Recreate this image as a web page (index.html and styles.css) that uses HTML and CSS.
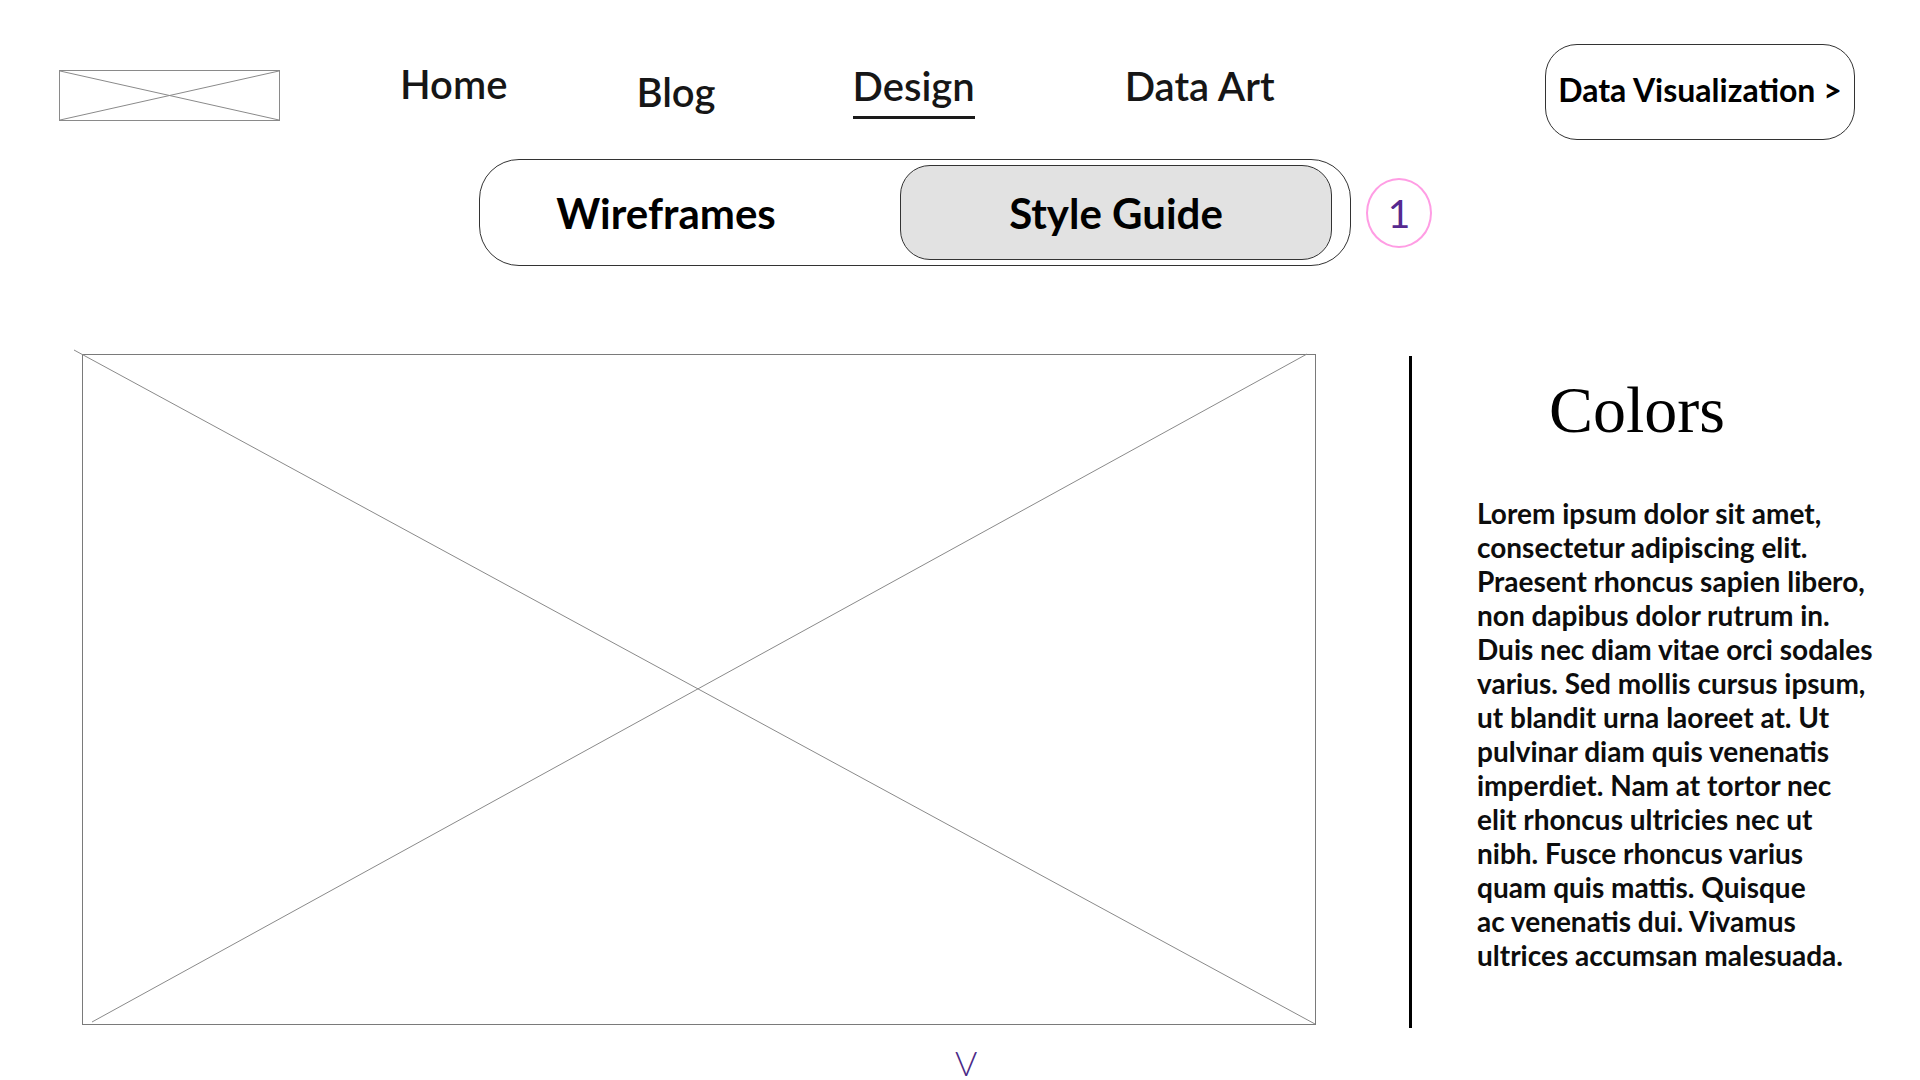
FILE: index.html
```html
<!DOCTYPE html>
<html lang="en">
<head>
<meta charset="UTF-8">
<meta name="viewport" content="width=device-width, initial-scale=1.0">
<title>Style Guide - Colors</title>
<link rel="stylesheet" href="styles.css">
</head>
<body>
<header class="topbar">
    <div class="logo">
        <svg width="221" height="51" viewBox="0 0 221 51">
            <rect x="0.5" y="0.5" width="220" height="50" fill="none" stroke="#8a8a8a"/>
            <line x1="1" y1="1" x2="220" y2="50" stroke="#8a8a8a"/>
            <line x1="1" y1="50" x2="220" y2="1" stroke="#8a8a8a"/>
        </svg>
    </div>
    <nav class="nav">
        <a class="nav-link home" href="#">Home</a>
        <a class="nav-link blog" href="#">Blog</a>
        <a class="nav-link design active" href="#">Design</a>
        <a class="nav-link art" href="#">Data Art</a>
    </nav>
    <a class="viz-btn" href="#">Data Visualization &gt;</a>
</header>

<div class="tabs-row">
    <div class="tabs">
        <div class="tab">Wireframes</div>
        <div class="tab active">Style Guide</div>
    </div>
    <span class="step">1</span>
</div>

<main class="content">
    <div class="placeholder">
        <svg width="1232" height="669" viewBox="0 0 1232 669">
            <line x1="-9" y1="-5" x2="1232" y2="669" stroke="#8a8a8a"/>
            <line x1="1224" y1="-1" x2="9" y2="667" stroke="#8a8a8a"/>
        </svg>
    </div>
    <div class="divider"></div>
    <section class="info">
        <h1>Colors</h1>
        <p>Lorem ipsum dolor sit amet,<br>
        consectetur adipiscing elit.<br>
        Praesent rhoncus sapien libero,<br>
        non dapibus dolor rutrum in.<br>
        Duis nec diam vitae orci sodales<br>
        varius. Sed mollis cursus ipsum,<br>
        ut blandit urna laoreet at. Ut<br>
        pulvinar diam quis venenatis<br>
        imperdiet. Nam at tortor nec<br>
        elit rhoncus ultricies nec ut<br>
        nibh. Fusce rhoncus varius<br>
        quam quis mattis. Quisque<br>
        ac venenatis dui. Vivamus<br>
        ultrices accumsan malesuada.</p>
    </section>
</main>

<div class="more">V</div>
</body>
</html>
```

FILE: styles.css
```css
body {
    margin: 0;
    font-family: Lato, "Open Sans", sans-serif;
    color: #111;
    background-color: #fff;
    overflow: hidden;
}
a {
    color: inherit;
    text-decoration: none;
}

/* top bar */
.topbar {
    display: flex;
    align-items: flex-start;
    padding: 44px 65px 0 59px;
    height: 96px;
}
.logo {
    margin-top: 26px;
    height: 51px;
}
.logo svg {
    display: block;
}
.nav {
    display: flex;
    align-items: flex-start;
    margin-left: 120px;
}
.nav-link {
    font-size: 40px;
    font-weight: 600;
    line-height: 1.2;
    margin-top: 16px;
    color: #161616;
}
.nav-link.blog {
    margin-left: 129px;
    margin-top: 24px;
}
.nav-link.design {
    margin-left: 137px;
    margin-top: 18px;
}
.nav-link.art {
    margin-left: 150px;
    margin-top: 18px;
}
.nav-link.active {
    padding-bottom: 6px;
    border-bottom: 3px solid #1a1a1a;
}
.viz-btn {
    margin-left: auto;
    box-sizing: border-box;
    width: 310px;
    height: 96px;
    padding-bottom: 6px;
    border: 1px solid #333;
    border-radius: 32px;
    display: flex;
    align-items: center;
    justify-content: center;
    font-size: 32px;
    font-weight: 700;
    color: #000;
}

/* segmented tabs */
.tabs-row {
    display: flex;
    align-items: center;
    margin-top: 19px;
    padding-left: 479px;
}
.tabs {
    display: flex;
    box-sizing: border-box;
    width: 872px;
    height: 107px;
    padding: 5px 18px 5px 0;
    border: 1px solid #333;
    border-radius: 40px;
}
.tab {
    flex: 1;
    display: flex;
    align-items: center;
    justify-content: center;
    padding-right: 48px;
    font-size: 42px;
    font-weight: 700;
    color: #000;
}
.tab.active {
    flex: 0 0 432px;
    box-sizing: border-box;
    padding-right: 0;
    background-color: #e2e2e2;
    border: 1px solid #333;
    border-radius: 30px;
}
.step {
    margin-left: 15px;
    box-sizing: border-box;
    width: 66px;
    height: 70px;
    border: 2px solid #ff9de4;
    border-radius: 50%;
    display: flex;
    align-items: center;
    justify-content: center;
    font-size: 39px;
    font-weight: 400;
    color: #56298f;
}

/* main content */
.content {
    display: flex;
    align-items: flex-start;
    margin-top: 88px;
    padding-left: 82px;
}
.placeholder {
    width: 1234px;
    height: 671px;
    box-sizing: border-box;
    border: 1px solid #7a7a7a;
}
.placeholder svg {
    display: block;
    overflow: visible;
}
.divider {
    width: 3px;
    height: 672px;
    margin: 2px 0 0 93px;
    background-color: #000;
}
.info {
    padding-left: 65px;
}
.info h1 {
    margin: 18px 0 0 72px;
    font-family: "Liberation Serif", "Times New Roman", serif;
    font-size: 66px;
    font-weight: 400;
    color: #000;
}
.info p {
    margin: 48px 0 0;
    font-size: 28px;
    font-weight: 700;
    line-height: 34px;
    color: #0d0d0d;
}

.more {
    margin-top: 14px;
    padding-left: 955px;
    font-size: 34px;
    font-weight: 300;
    color: #4b2a88;
}
```
